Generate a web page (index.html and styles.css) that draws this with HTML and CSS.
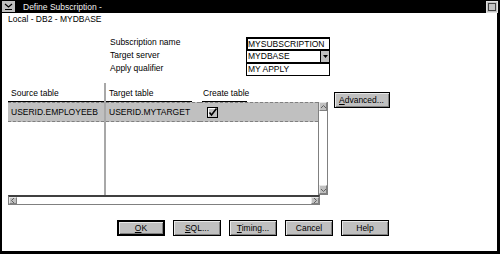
FILE: index.html
```html
<!DOCTYPE html>
<html lang="en">
<head>
  <meta charset="UTF-8">
  <title>Define Subscription</title>
  <link rel="stylesheet" href="styles.css">
</head>
<body>
  <div class="window">
    <div class="titlebar">
      <div class="sysmenu">
        <svg width="9" height="7" viewBox="0 0 9 7"><path d="M1 1 L4.5 4 L8 1" fill="none" stroke="#000" stroke-width="1.2"/><path d="M1 6.5 H8" stroke="#000"/></svg>
      </div>
      <span class="title">Define Subscription -</span>
      <div class="maxbtn"><span></span></div>
    </div>

    <div class="subtitle">Local - DB2 - MYDBASE</div>

    <div class="form">
      <label>Subscription name</label>
      <div class="field focus">MYSUBSCRIPTION</div>
      <label>Target server</label>
      <div class="field combo">MYDBASE<span class="drop"><svg width="5" height="5" viewBox="0 0 5 5"><path d="M0 1 H5 L2.5 4 Z" fill="#000"/></svg></span></div>
      <label>Apply qualifier</label>
      <div class="field">MY APPLY</div>
    </div>

    <div class="table-area">
      <div class="list">
        <div class="list-top">
          <div class="grid">
            <div class="col first">
              <div class="head"><span>Source table</span></div>
              <div class="cell">USERID.EMPLOYEEB</div>
            </div>
            <div class="col">
              <div class="head"><span>Target table</span></div>
              <div class="cell">USERID.MYTARGET</div>
            </div>
            <div class="col last">
              <div class="head"><span>Create table</span></div>
              <div class="cell">
                <svg class="check" width="11" height="11" viewBox="0 0 11 11">
                  <rect x="0.5" y="0.5" width="10" height="10" fill="#c0c0c0" stroke="#000"/>
                  <path d="M1.5 9.5 V1.5 H9.5" fill="none" stroke="#fff"/>
                  <path d="M2.5 5.5 L4.5 8 L9.5 1.5" fill="none" stroke="#000" stroke-width="1.6"/>
                </svg>
              </div>
            </div>
          </div>
          <div class="vscroll">
            <div class="sbtn"><svg width="5" height="4" viewBox="0 0 5 4"><path d="M0 3 L2.5 0.5 L5 3" fill="none" stroke="#606060"/></svg></div>
            <div class="strack"></div>
            <div class="sbtn"><svg width="5" height="4" viewBox="0 0 5 4"><path d="M0 1 L2.5 3.5 L5 1" fill="none" stroke="#606060"/></svg></div>
          </div>
        </div>
        <div class="hscroll">
          <div class="sbtn"><svg width="4" height="5" viewBox="0 0 4 5"><path d="M3 0 L0.5 2.5 L3 5" fill="none" stroke="#606060"/></svg></div>
          <div class="strack"></div>
          <div class="sbtn"><svg width="4" height="5" viewBox="0 0 4 5"><path d="M1 0 L3.5 2.5 L1 5" fill="none" stroke="#606060"/></svg></div>
        </div>
      </div>
      <button class="btn advanced"><u>A</u>dvanced...</button>
    </div>

    <div class="buttons">
      <button class="btn default"><u>O</u>K</button>
      <button class="btn"><u>S</u>QL...</button>
      <button class="btn"><u>T</u>iming...</button>
      <button class="btn">Cancel</button>
      <button class="btn">Help</button>
    </div>
  </div>
</body>
</html>
```

FILE: styles.css
```css
body {
  margin:0; padding:0;
  background:#fff;
  font-family: "Liberation Sans", Arial, sans-serif;
  font-size:8.5px; color:#000;
}
.window {
  width:500px; height:254px;
  box-sizing:border-box;
  border-left:2px solid #000;
  border-right:3px solid #000;
  border-bottom:3px solid #000;
  background:#fff;
  display:flex; flex-direction:column;
  white-space:nowrap;
}
.titlebar {
  height:13px; background:#000;
  display:flex; align-items:center;
  margin-left:-2px; margin-right:-3px;
}
.sysmenu {
  width:13px; height:11px; margin-left:2px;
  background:#c0c0c0;
  display:flex; align-items:center; justify-content:center;
}
.title { color:#f0f0f0; margin-left:8px; }
.maxbtn {
  margin-left:auto; margin-right:2px;
  width:12px; height:12px; box-sizing:border-box;
  background:#c0c0c0; border:1px solid #e0e0e0;
  display:flex; align-items:center; justify-content:center;
}
.maxbtn span {
  width:6px; height:6px; border:1px solid #404040; background:#c0c0c0;
}
.subtitle { padding:1px 0 0 6px; height:11px; line-height:10px; }

.form {
  display:grid;
  grid-template-columns:136px 84px;
  grid-auto-rows:13px;
  margin:12px 0 0 108px;
}
.form label { line-height:11px; }
.field {
  height:13px; box-sizing:border-box;
  border:1px solid #000;
  line-height:11px; padding-left:1px;
  display:flex;
}
.field.focus { border-width:2px 1px 1px 2px; line-height:10px; padding-left:0; }
.combo { justify-content:space-between; }
.drop {
  width:9px; height:11px; box-sizing:border-box;
  background:#c0c0c0; border-left:1px solid #000;
  display:flex; align-items:center; justify-content:center;
}

.table-area {
  display:flex; align-items:flex-start;
  margin:7px 0 0 6px;
}
.list { width:320px; }
.list-top { display:flex; }
.grid { display:flex; width:310px; height:112px; }
.col { display:flex; flex-direction:column; }
.col.first { width:96px; border-right:2px solid #a8a8a8; }
.col:nth-child(2) { width:94px; }
.col.last { flex:1; }
.head {
  height:18px; padding-top:1px;
  display:flex; align-items:flex-end;
}
.head span {
  display:block; border-bottom:1px solid #000;
  padding:0 0 3px 3px; width:100%; line-height:9px;
}
.col:nth-child(2) .head span { width:83px; }
.col.last .head span { width:44px; margin-left:2px; padding-left:1px; }
.cell {
  height:18px; background:#c0c0c0;
  border-top:1px dashed #808080; border-bottom:1px dashed #808080;
  padding-left:3px;
  display:flex; align-items:center;
}
.col.last .cell { padding-left:7px; }
.check { display:block; }

.vscroll {
  width:10px; height:93px; margin-top:19px; box-sizing:border-box;
  border:1px solid #808080; border-top:none;
  display:flex; flex-direction:column;
}
.sbtn {
  width:8px; height:9px; box-sizing:border-box;
  background:#c0c0c0; border:1px solid #e8e8e8;
  border-right-color:#808080; border-bottom-color:#808080;
  display:flex; align-items:center; justify-content:center;
}
.strack { flex:1; background:#fff; }
.hscroll {
  display:flex; height:10px; width:312px; box-sizing:border-box;
  border-top:2px solid #404040; border-bottom:1px solid #808080;
  border-left:1px solid #808080; border-right:1px solid #808080;
}
.hscroll .sbtn { height:7px; width:8px; }

.btn {
  font-family:inherit; font-size:8.5px; color:#000;
  background:#c0c0c0; padding:0;
  border:1px solid #000;
  box-shadow:inset 1px 1px 0 #e8e8e8, inset -1px -1px 0 #808080;
  height:16px; width:48px;
}
.advanced { width:56px; margin:9px 0 0 6px; text-align:left; padding-left:4px; }
.buttons {
  display:flex; gap:8px;
  margin:15px 0 0 115px;
}
.btn.default { border-width:2px; }
```
